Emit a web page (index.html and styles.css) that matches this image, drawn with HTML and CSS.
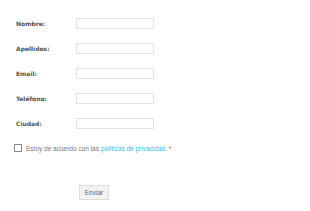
FILE: index.html
```html
<!DOCTYPE html>
<html lang="es">
<head>
<meta charset="utf-8">
<link rel="stylesheet" href="styles.css">
</head>
<body>
<form class="form">
  <div class="rows">
    <label class="label">Nombre:</label><span class="input"></span>
    <label class="label">Apellidos:</label><span class="input"></span>
    <label class="label">Email:</label><span class="input"></span>
    <label class="label">Teléfono:</label><span class="input"></span>
    <label class="label">Ciudad:</label><span class="input"></span>
  </div>
  <div class="consent">
    <span class="check"></span>
    <span class="consent-text">Estoy de acuerdo con las <a class="link">políticas de privacidad.</a> <span class="req">*</span></span>
  </div>
  <div class="actions">
    <span class="button">Enviar</span>
  </div>
</form>
</body>
</html>
```
FILE: styles.css
```css
html, body { margin: 0; padding: 0; background: #fff; }
.form { padding: 18px 0 0 16px; width: 294px; box-sizing: border-box; }
.rows {
  display: grid;
  grid-template-columns: 60px 78px;
  row-gap: 14px;
  align-items: center;
}
.label {
  font-family: "DejaVu Sans", sans-serif;
  font-weight: bold;
  font-size: 6px;
  color: #574d4b;
}
.input {
  display: block;
  height: 11px;
  box-sizing: border-box;
  border: 1px solid #e2e2e2;
  background: #fff;
}
.consent {
  display: flex;
  align-items: center;
  gap: 4px;
  margin: 15px 0 0 -2px;
}
.check {
  width: 8px; height: 8px;
  box-sizing: border-box;
  border: 1px solid #8a8a8a;
  background: #fff;
}
.consent-text {
  font-family: "Liberation Sans", Arial, sans-serif;
  font-size: 6.5px;
  color: #777;
}
.link { color: #2fbfe8; text-decoration: none; }
.req { color: #e53935; }
.actions { padding: 29px 0 0 63px; }
.button {
  display: inline-flex;
  align-items: center;
  justify-content: center;
  width: 30px; height: 15px;
  box-sizing: border-box;
  border: 1px solid #dcdcdc;
  background: #f2f2f2;
  font-family: "Liberation Sans", Arial, sans-serif;
  font-size: 6.5px;
  color: #666;
}
```
